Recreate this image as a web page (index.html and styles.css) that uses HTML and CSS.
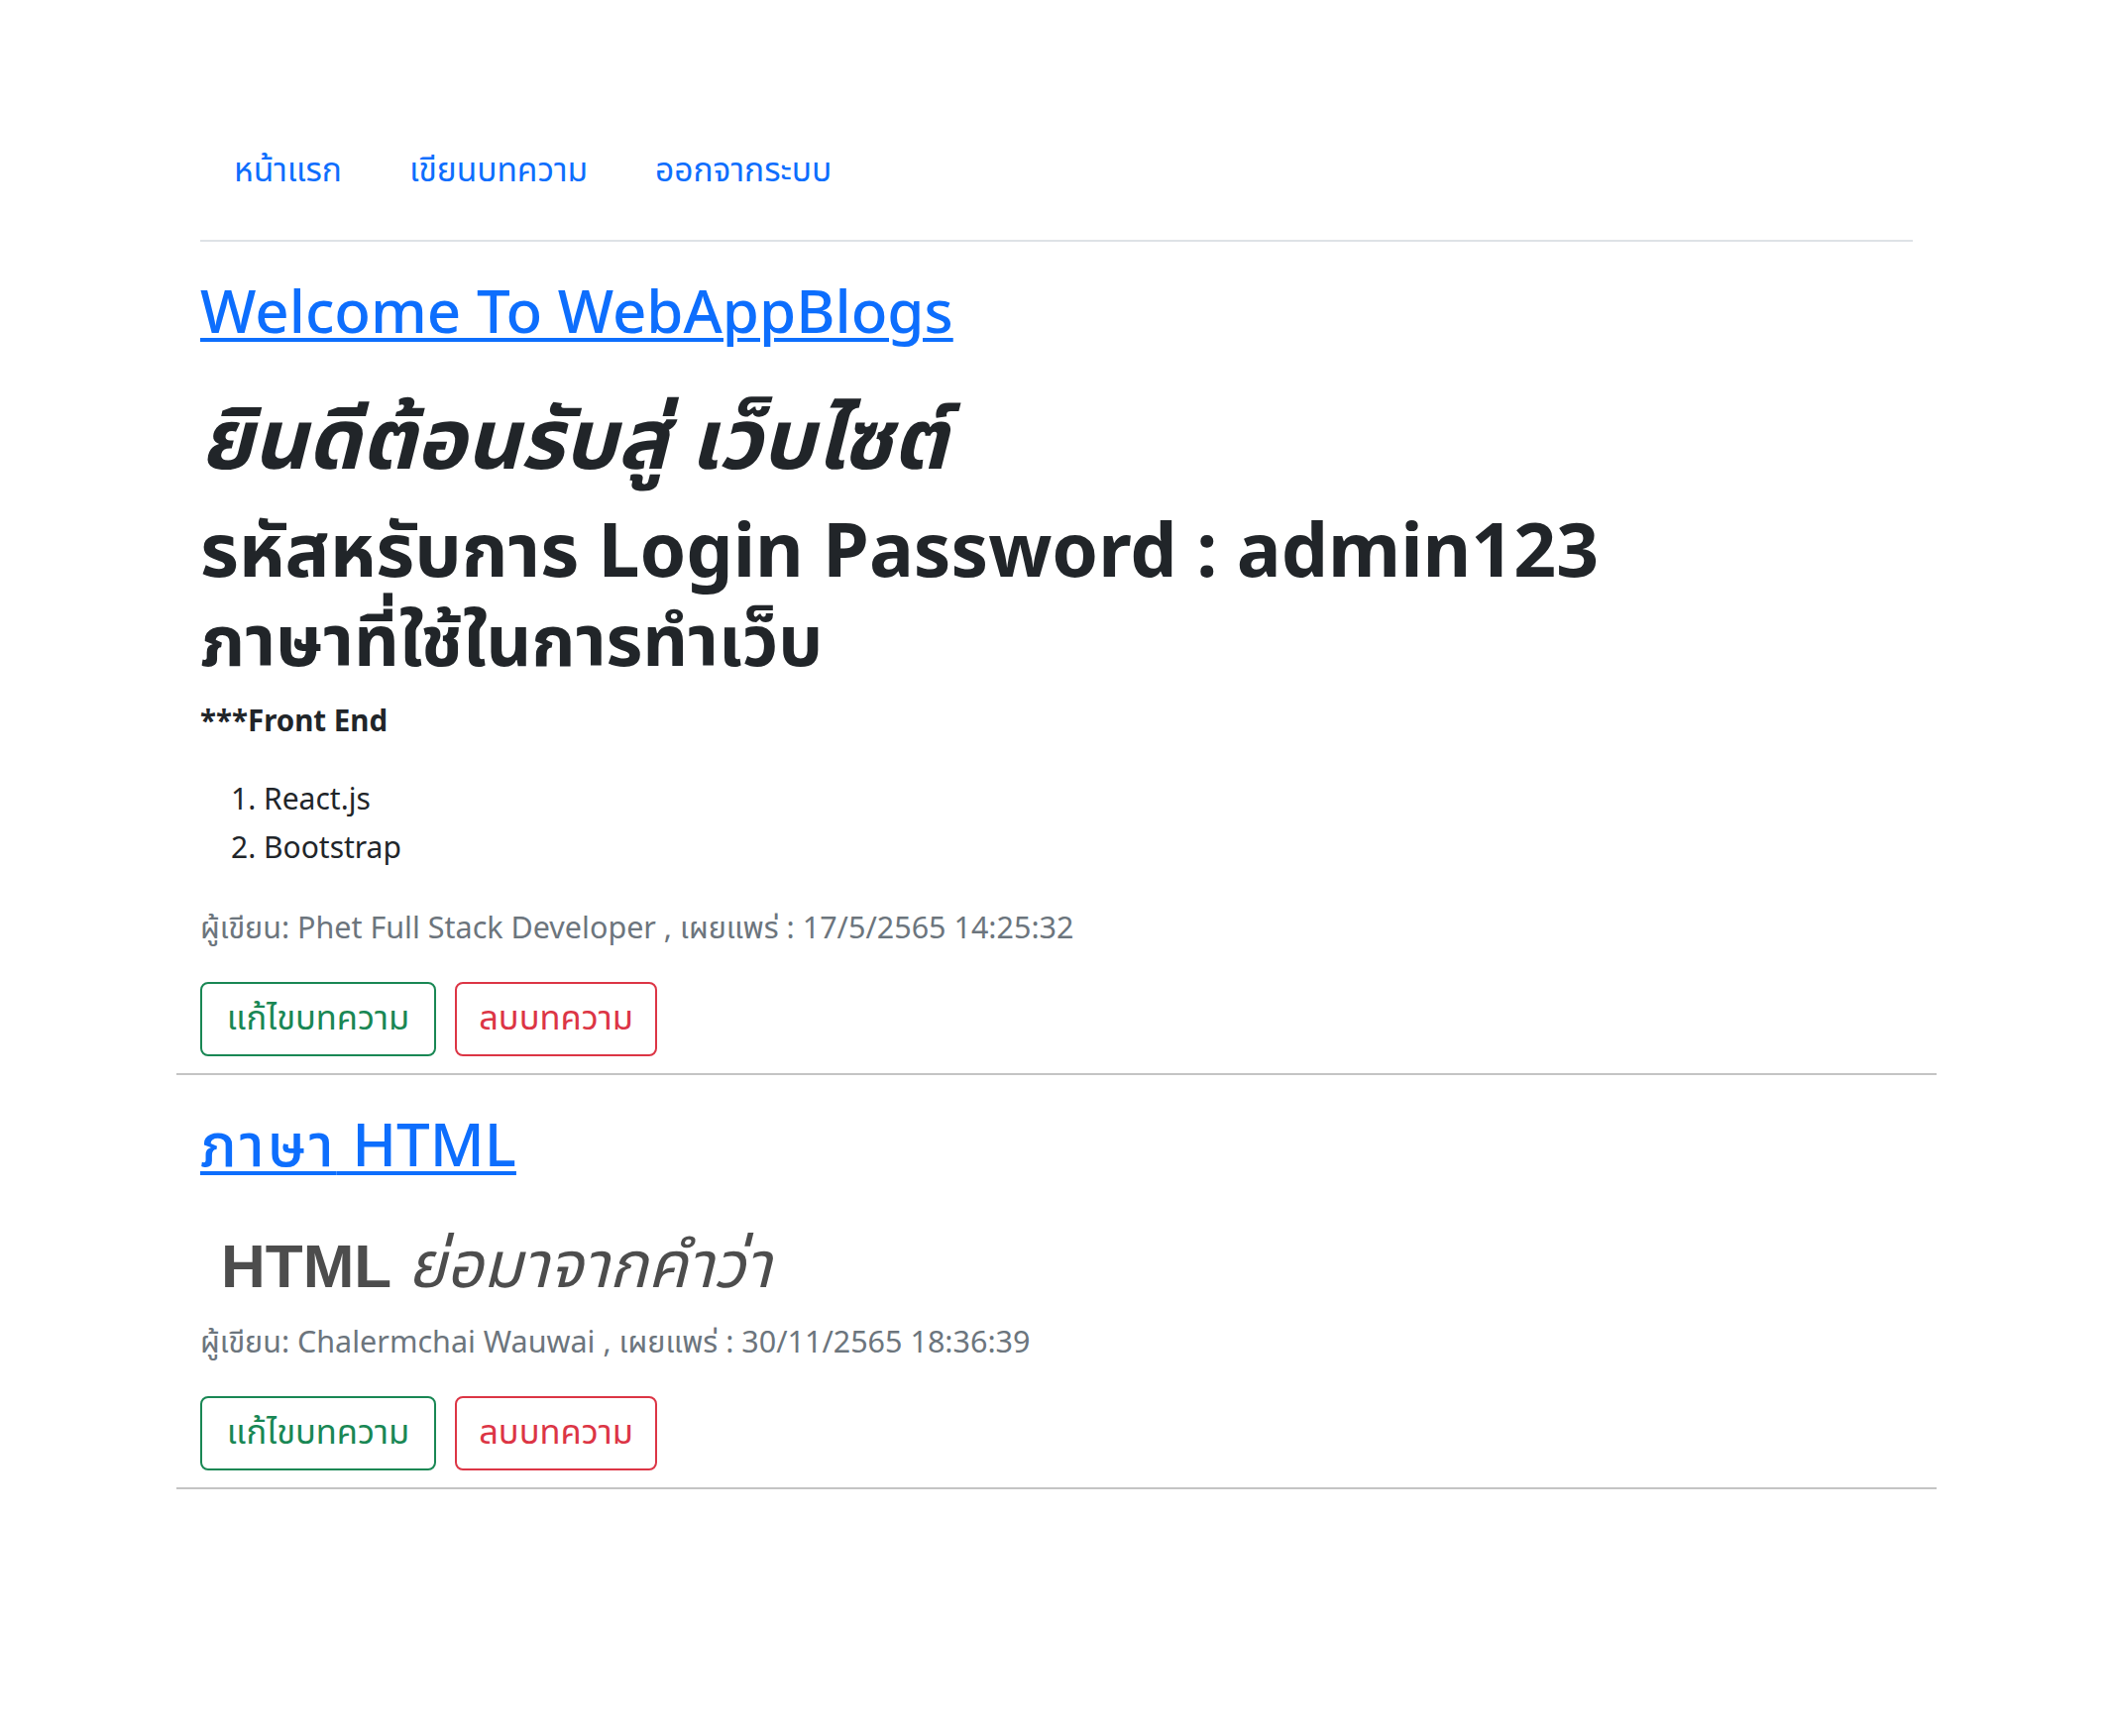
FILE: index.html
```html
<!DOCTYPE html>
<html lang="th">
<head>
<meta charset="utf-8">
<title>WebAppBlogs</title>
<link rel="stylesheet" href="styles.css">
</head>
<body>
<div class="container">
  <nav class="topnav">
    <a class="nav-link" href="#">หน้าแรก</a>
    <a class="nav-link" href="#">เขียนบทความ</a>
    <a class="nav-link" href="#">ออกจากระบบ</a>
  </nav>

  <article class="post">
    <h1 class="post-title"><a href="#">Welcome To WebAppBlogs</a></h1>
    <div class="post-body">
      <h1 class="h-italic"><em>ยินดีต้อนรับสู่ เว็บไซต์</em></h1>
      <h1 class="h-big">รหัสหรับการ Login Password : admin123</h1>
      <h2 class="h-sub">ภาษาที่ใช้ในการทำเว็บ</h2>
      <p class="p-strong"><strong>***Front End</strong></p>
      <ol class="list">
        <li>React.js</li>
        <li>Bootstrap</li>
      </ol>
    </div>
    <p class="meta">ผู้เขียน: Phet Full Stack Developer , เผยแพร่ : 17/5/2565 14:25:32</p>
    <div class="actions">
      <a class="btn btn-green" href="#">แก้ไขบทความ</a>
      <button class="btn btn-red" type="button">ลบบทความ</button>
    </div>
  </article>

  <article class="post">
    <h1 class="post-title"><a href="#"><span class="th-wide">ภาษา</span> HTML</a></h1>
    <div class="post-body">
      <h1 class="h-html"><strong>HTML</strong> <em>ย่อมาจากคำว่า</em></h1>
    </div>
    <p class="meta meta2">ผู้เขียน: Chalermchai Wauwai , เผยแพร่ : 30/11/2565 18:36:39</p>
    <div class="actions">
      <a class="btn btn-green" href="#">แก้ไขบทความ</a>
      <button class="btn btn-red" type="button">ลบบทความ</button>
    </div>
  </article>
</div>
</body>
</html>
```

FILE: styles.css
```css
html, body {
  margin: 0;
  padding: 0;
  background: #ffffff;
}
body {
  font-family: "Noto Sans", "Noto Sans Thai", "Leelawadee UI", "Loma", sans-serif;
  color: #212529;
  font-size: 30px;
}
.container {
  margin-left: 178px;
  width: 1776px;
}
.topnav {
  margin: 0 24px;
  padding: 150px 0 52px;
  border-bottom: 2px solid #dee2e6;
  display: flex;
  align-items: flex-start;
}
.nav-link {
  color: #0d6efd;
  text-decoration: none;
  font-size: 33.5px;
  line-height: 40px;
  padding: 0 34px;
}
.post {
  padding: 29px 24px 17px;
  border-bottom: 2px solid #c4c4c4;
}
.post-title {
  margin: 0;
  font-size: 60px;
  font-weight: 500;
  line-height: 80px;
}
.post-title a {
  color: #0d6efd;
  text-decoration: underline;
  text-decoration-thickness: 4px;
  text-underline-offset: 5px;
}
.th-wide {
  letter-spacing: 3px;
}
.post-body h1,
.post-body h2,
.post-body p,
.post-body ol {
  margin: 0;
}
.post-body .h-italic {
  font-size: 85px;
  font-weight: 700;
  line-height: 100px;
  margin-top: 37px;
}
.post-body .h-big {
  font-size: 75px;
  font-weight: 700;
  line-height: 100px;
  margin-top: 13px;
}
.post-body .h-sub {
  font-size: 71px;
  font-weight: 700;
  line-height: 80px;
  margin-top: 2px;
}
.post-body .p-strong {
  font-size: 29.5px;
  line-height: 40px;
  margin-top: 22px;
}
.post-body .list {
  font-size: 30px;
  line-height: 49px;
  padding-left: 64px;
  margin-top: 34px;
}
.meta {
  color: #6c757d;
  font-size: 30.5px;
  line-height: 40px;
  margin: 36px 0 0;
}
.meta2 {
  margin-top: 10px;
}
.post-body .h-html {
  font-size: 62px;
  font-weight: 400;
  line-height: 90px;
  padding-left: 21px;
  color: #4d4d4d;
  margin-top: 35px;
}
.h-html strong {
  font-family: "Liberation Sans", Arial, sans-serif;
  font-weight: 700;
}
.h-html em {
  font-size: 65px;
}
.actions {
  display: flex;
  gap: 19px;
  margin-top: 36px;
}
.btn {
  box-sizing: border-box;
  height: 75px;
  display: inline-flex;
  align-items: center;
  justify-content: center;
  font-family: inherit;
  font-size: 34.5px;
  background: #ffffff;
  border-radius: 8px;
  text-decoration: none;
  cursor: pointer;
  padding: 0;
}
.btn-green {
  width: 238px;
  color: #198754;
  border: 2px solid #198754;
}
.btn-red {
  width: 204px;
  color: #dc3545;
  border: 2px solid #dc3545;
}
```
